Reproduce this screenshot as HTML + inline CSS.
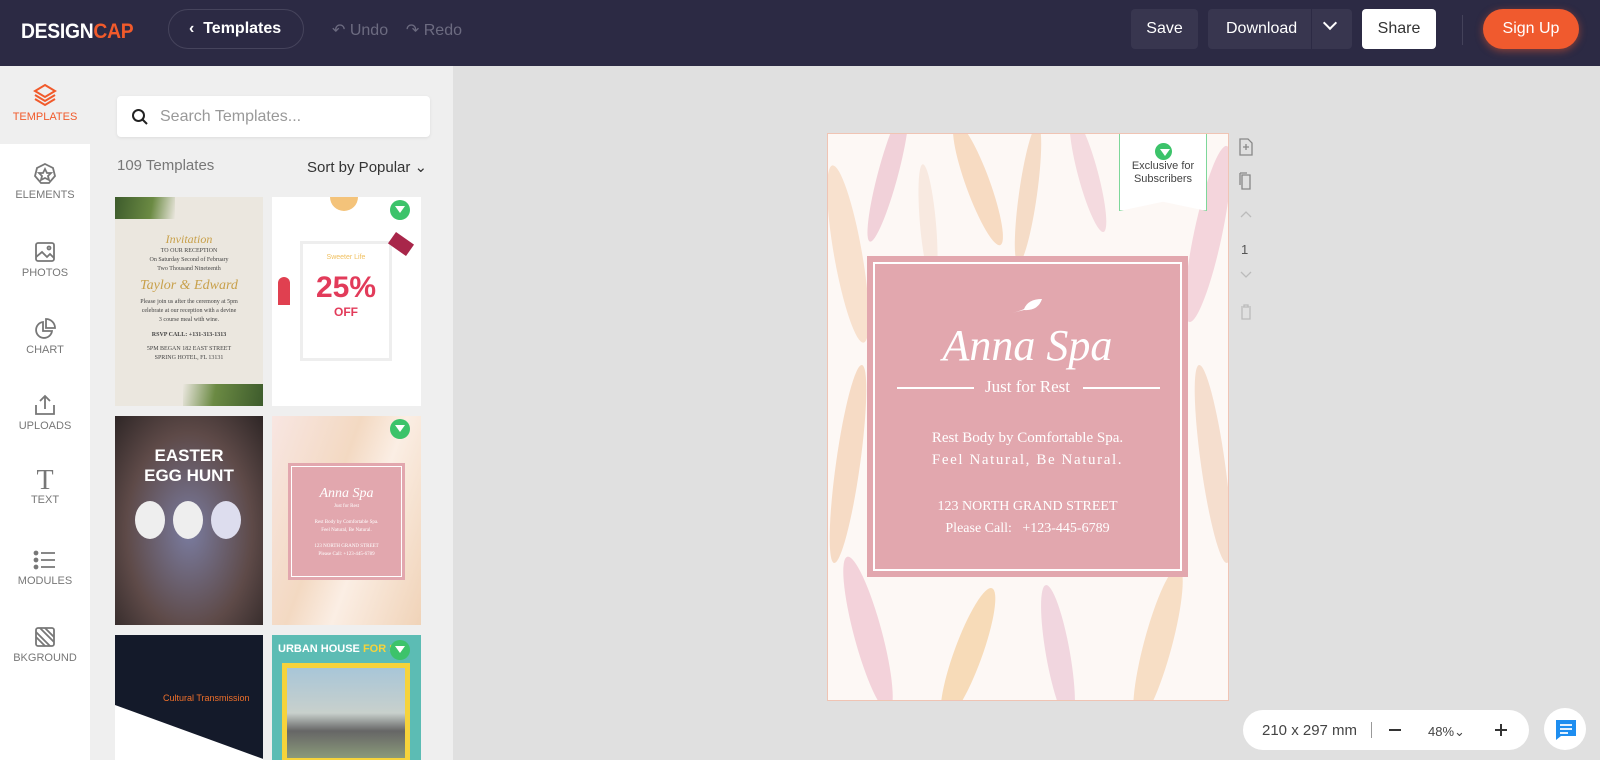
<!DOCTYPE html>
<html><head><meta charset="utf-8"><style>
*{margin:0;padding:0;box-sizing:border-box}
html,body{width:1600px;height:760px;overflow:hidden}
body{font-family:"Liberation Sans",sans-serif;background:#e0e0e0}
#w{position:relative;width:1600px;height:760px;overflow:hidden}
.a{position:absolute}
.hdr{left:0;top:0;width:1600px;height:66px;background:#2c2a44}
.btn{position:absolute;top:9px;height:40px;border-radius:4px;color:#fff;font-size:16px;display:flex;align-items:center;justify-content:center}
.side{left:0;top:66px;width:90px;height:694px;background:#fff}
.si{position:absolute;left:0;width:90px;text-align:center;font-size:11px;color:#777}
.panel{left:90px;top:66px;width:363px;height:694px;background:#efefef;overflow:hidden}
.th{position:absolute;overflow:hidden}
.gem{position:absolute;width:20px;height:20px;border-radius:50%;background:#3cc36a}
.gem:after{content:"";position:absolute;left:5px;top:6px;border-left:5px solid transparent;border-right:5px solid transparent;border-top:7px solid #fff}
.serif{font-family:"Liberation Serif",serif}
</style></head><body><div id="w">
<div class="a hdr"></div>
<div class="a" style="left:21px;top:20px;font-size:21px;font-weight:bold;color:#fff;letter-spacing:-0.3px;transform:scaleX(0.92);transform-origin:0 0">DESIGN<span style="color:#f15a2b">CAP</span></div>
<div class="a" style="left:168px;top:9px;width:136px;height:40px;border:1px solid #46445c;border-radius:20px;color:#fff;font-size:16px;font-weight:bold;display:flex;align-items:center;padding-left:20px">‹&nbsp;&nbsp;Templates</div>
<div class="a" style="left:332px;top:20px;color:#6c6b80;font-size:16px">↶ Undo &nbsp;&nbsp; ↷ Redo</div>
<div class="btn" style="left:1131px;width:67px;background:#38364f">Save</div>
<div class="btn" style="left:1208px;width:144px;background:#38364f;justify-content:flex-start;padding-left:18px">Download</div>
<div class="a" style="left:1311px;top:9px;width:1px;height:40px;background:#2c2a44"></div>
<div class="a" style="left:1325px;top:18px;width:10px;height:10px;border-right:2px solid #fff;border-bottom:2px solid #fff;transform:rotate(45deg)"></div>
<div class="btn" style="left:1362px;width:74px;background:#fff;color:#333">Share</div>
<div class="a" style="left:1462px;top:15px;width:1px;height:30px;background:#44425a"></div>
<div class="btn" style="left:1483px;width:96px;border-radius:20px;background:#f05a2e;box-shadow:0 2px 8px rgba(240,90,46,.5)">Sign Up</div>

<div class="a side"></div>
<div class="a" style="left:0;top:66px;width:90px;height:78px;background:#efefef"></div>
<div class="si" style="top:82px;color:#f15a2b"><svg width="26" height="26" viewBox="0 0 26 26" fill="none" stroke="#f15a2b" stroke-width="2"><path d="M13 3 L23 9 L13 15 L3 9Z"/><path d="M3 13 L13 19 L23 13"/><path d="M3 17 L13 23 L23 17"/></svg><br>TEMPLATES</div>
<div class="si" style="top:162px"><svg width="24" height="24" viewBox="0 0 24 24" fill="none" stroke="#777" stroke-width="1.8"><path d="M12 2 L20 6 L22 14 L16 21 L8 21 L2 14 L4 6Z"/><path d="M12 7 L14 11 L18 11 L15 14 L16 18 L12 16 L8 18 L9 14 L6 11 L10 11Z"/></svg><br>ELEMENTS</div>
<div class="si" style="top:240px"><svg width="24" height="24" viewBox="0 0 24 24" fill="none" stroke="#777" stroke-width="1.8"><rect x="3" y="3" width="18" height="18" rx="2"/><path d="M3 17 L9 12 L14 17 L17 14 L21 18"/><circle cx="16" cy="8" r="1.5"/></svg><br>PHOTOS</div>
<div class="si" style="top:317px"><svg width="24" height="24" viewBox="0 0 24 24" fill="none" stroke="#777" stroke-width="1.8"><path d="M10 5 A8 8 0 1 0 19 14 L10 14Z"/><path d="M13 2 A9 9 0 0 1 22 11 L13 11Z"/></svg><br>CHART</div>
<div class="si" style="top:393px"><svg width="24" height="24" viewBox="0 0 24 24" fill="none" stroke="#777" stroke-width="1.8"><path d="M12 16 V3 M7 8 L12 3 L17 8"/><path d="M3 12 V21 H21 V12"/></svg><br>UPLOADS</div>
<div class="si" style="top:468px"><div style="font-family:'Liberation Serif',serif;font-size:28px;line-height:26px;color:#777">T</div>TEXT</div>
<div class="si" style="top:548px"><svg width="24" height="24" viewBox="0 0 24 24" stroke="#777" stroke-width="1.8"><path d="M8 5H22M8 12H22M8 19H22"/><circle cx="3" cy="5" r="1.5" fill="#777"/><circle cx="3" cy="12" r="1.5" fill="#777"/><circle cx="3" cy="19" r="1.5" fill="#777"/></svg><br>MODULES</div>
<div class="si" style="top:625px"><svg width="24" height="24" viewBox="0 0 24 24" fill="none" stroke="#777" stroke-width="1.8"><rect x="3" y="3" width="18" height="18" rx="2"/><path d="M3 12 L12 21 M3 7 L17 21 M7 3 L21 17 M12 3 L21 12"/></svg><br>BKGROUND</div>

<div class="a panel"></div>
<div class="a" style="left:117px;top:96px;width:313px;height:41px;background:#fff;border-radius:4px;box-shadow:0 1px 3px rgba(0,0,0,.08)"></div>
<svg class="a" style="left:131px;top:108px" width="18" height="18" viewBox="0 0 18 18" fill="none" stroke="#222" stroke-width="2"><circle cx="7.5" cy="7.5" r="5.5"/><path d="M11.5 11.5 L16 16"/></svg>
<div class="a" style="left:160px;top:108px;font-size:16px;color:#999">Search Templates...</div>
<div class="a" style="left:117px;top:157px;font-size:15px;color:#777">109 Templates</div>
<div class="a" style="left:307px;top:158px;font-size:15px;color:#333">Sort by Popular ⌄</div>

<div class="th" style="left:115px;top:197px;width:148px;height:209px;background:#ebe7df">
<div class="a" style="left:0;top:0;width:60px;height:22px;background:linear-gradient(100deg,#3d5b2c,#6b8a43 60%,transparent)"></div>
<div class="a" style="right:0;bottom:0;width:80px;height:22px;background:linear-gradient(280deg,#3d5b2c,#6b8a43 60%,transparent)"></div>
<div class="a" style="left:0;top:38px;width:148px;text-align:center;font-family:'Liberation Serif',serif;font-size:6px;color:#444;line-height:9px"><span style="font-style:italic;color:#c8a04a;font-size:12px">Invitation</span><br>TO OUR RECEPTION<br>On Saturday Second of February<br>Two Thousand Nineteenth<br><span style="font-style:italic;color:#c8a04a;font-size:14px;line-height:24px">Taylor &amp; Edward</span><br>Please join us after the ceremony at 5pm<br>celebrate at our reception with a devine<br>3 course meal with wine.<br><b style="line-height:20px">RSVP CALL: +131-313-1313</b><br>5PM BEGAN 182 EAST STREET<br>SPRING HOTEL, FL 13131</div></div>

<div class="th" style="left:272px;top:197px;width:149px;height:209px;background:#fff">
<div class="a" style="left:28px;top:44px;width:92px;height:120px;border:3px solid #eee;text-align:center;font-size:7px;color:#f0c060;padding-top:10px">Sweeter Life<div style="color:#e23b5a;font-size:30px;font-weight:bold;margin-top:10px">25%</div><div style="color:#e23b5a;font-size:12px;font-weight:bold">OFF</div></div>
<div class="a" style="left:6px;top:80px;width:12px;height:28px;background:#e04050;border-radius:6px 6px 0 0"></div>
<div class="a" style="left:118px;top:40px;width:22px;height:14px;background:#a8264a;transform:rotate(35deg)"></div>
<div class="a" style="left:58px;top:0;width:28px;height:14px;background:#f4c37a;border-radius:0 0 14px 14px"></div>
<div class="gem" style="left:118px;top:3px"></div></div>

<div class="th" style="left:115px;top:416px;width:148px;height:209px;background:radial-gradient(ellipse at 50% 55%,#7a7ca0,#5e4a48 60%,#2e2626)">
<div class="a" style="left:0;top:30px;width:148px;text-align:center;color:#fff;font-weight:bold;font-size:17px;line-height:20px">EASTER<br>EGG HUNT</div>
<div class="a" style="left:20px;top:85px;width:30px;height:38px;border-radius:50%;background:#eee"></div>
<div class="a" style="left:58px;top:85px;width:30px;height:38px;border-radius:50%;background:#eee"></div>
<div class="a" style="left:96px;top:85px;width:30px;height:38px;border-radius:50%;background:#dde"></div></div>

<div class="th" style="left:272px;top:416px;width:149px;height:209px;background:linear-gradient(110deg,#f8e6e2,#f3d9c2 40%,#fbeee4 60%,#f0d3b8)">
<div class="a" style="left:16px;top:47px;width:117px;height:117px;background:#e2a7ae;border:2px solid #e2a7ae;outline:1px solid #fff;outline-offset:-4px;text-align:center;color:#fff;font-family:'Liberation Serif',serif;font-size:5px;padding-top:20px;line-height:8px"><i style="font-size:14px;line-height:18px">Anna Spa</i><br>Just for Rest<br><br>Rest Body by Comfortable Spa.<br>Feel Natural, Be Natural.<br><br>123 NORTH GRAND STREET<br>Please Call: +123-445-6789</div>
<div class="gem" style="left:118px;top:3px"></div></div>

<div class="th" style="left:115px;top:635px;width:148px;height:125px;background:#141a2a">
<div class="a" style="left:0;top:70px;width:148px;height:60px;background:#fff;transform:skewY(20deg);transform-origin:0 0"></div>
<div class="a" style="left:48px;top:58px;font-size:9px;color:#f0702a">Cultural Transmission</div></div>
<div class="th" style="left:272px;top:635px;width:149px;height:125px;background:#5cbcb4">
<div class="a" style="left:6px;top:8px;font-size:11px;color:#fff;font-weight:bold">URBAN HOUSE <span style="color:#f6d33b">FOR S</span></div>
<div class="a" style="left:10px;top:28px;width:128px;height:100px;border:5px solid #f6d33b;background:linear-gradient(#a8c6d8,#c8d0cc 50%,#666 70%,#8a9a7a)"></div>
<div class="gem" style="left:118px;top:5px"></div></div>

<!-- canvas -->
<div class="a" style="left:827px;top:133px;width:402px;height:568px;border:1px solid #f0c4b4;overflow:hidden;background:#fdf8f5">
<svg width="402" height="568" viewBox="0 0 402 568">
<g opacity=".6">
<ellipse cx="20" cy="120" rx="14" ry="90" fill="#f6d2b4" transform="rotate(-10 20 120)"/>
<ellipse cx="60" cy="40" rx="10" ry="70" fill="#e9b8c6" transform="rotate(15 60 40)"/>
<ellipse cx="150" cy="50" rx="12" ry="65" fill="#f3c8a0" transform="rotate(-20 150 50)"/>
<ellipse cx="200" cy="60" rx="9" ry="70" fill="#f0caa8" transform="rotate(8 200 60)"/>
<ellipse cx="260" cy="40" rx="10" ry="60" fill="#efc7d0" transform="rotate(-15 260 40)"/>
<ellipse cx="380" cy="100" rx="14" ry="90" fill="#efbfcb" transform="rotate(12 380 100)"/>
<ellipse cx="20" cy="330" rx="12" ry="100" fill="#f2c8a6" transform="rotate(8 20 330)"/>
<ellipse cx="385" cy="330" rx="12" ry="100" fill="#f1cdb5" transform="rotate(-8 385 330)"/>
<ellipse cx="40" cy="500" rx="14" ry="80" fill="#edbac8" transform="rotate(-15 40 500)"/>
<ellipse cx="140" cy="520" rx="14" ry="70" fill="#f4c890" transform="rotate(20 140 520)"/>
<ellipse cx="230" cy="520" rx="12" ry="70" fill="#e9c0d0" transform="rotate(-10 230 520)"/>
<ellipse cx="330" cy="510" rx="14" ry="80" fill="#f4cda6" transform="rotate(15 330 510)"/>
<ellipse cx="100" cy="90" rx="8" ry="60" fill="#f6e0d2" transform="rotate(-5 100 90)"/>
</g></svg></div>
<div class="a" style="left:1119px;top:134px;width:88px;height:77px;background:#fff;border:1px solid #7ed79a;border-top:none;clip-path:polygon(0 0,100% 0,100% 100%,50% 88%,0 100%);text-align:center;font-size:11px;color:#444;padding-top:26px;line-height:13px">Exclusive for<br>Subscribers</div>
<div class="gem" style="left:1155px;top:143px;width:17px;height:17px"></div>
<div class="a" style="left:867px;top:256px;width:321px;height:321px;background:#e2a7ae"></div>
<div class="a" style="left:873px;top:262px;width:309px;height:309px;border:2px solid #fff"></div>
<svg class="a" style="left:1010px;top:297px" width="34" height="18" viewBox="0 0 34 18"><path d="M2 16 Q10 14 14 12 Q18 2 32 2 Q28 14 14 13" fill="#fff"/></svg>
<div class="a" style="left:867px;top:320px;width:321px;text-align:center;color:#fff;font-family:'Liberation Serif',serif;font-style:italic;font-size:44px">Anna Spa</div>
<div class="a" style="left:897px;top:387px;width:77px;height:2px;background:#fff"></div>
<div class="a" style="left:1083px;top:387px;width:77px;height:2px;background:#fff"></div>
<div class="a serif" style="left:867px;top:377px;width:321px;text-align:center;color:#fff;font-size:17px">Just for Rest</div>
<div class="a serif" style="left:867px;top:427px;width:321px;text-align:center;color:#fff;font-size:15px;line-height:22px">Rest Body by Comfortable Spa.<br><span style="letter-spacing:1.6px">Feel Natural, Be Natural.</span></div>
<div class="a serif" style="left:867px;top:496px;width:321px;text-align:center;color:#fff;font-size:14px;line-height:22px">123 NORTH GRAND STREET<br>Please Call:&nbsp;&nbsp; +123-445-6789</div>

<svg class="a" style="left:1238px;top:137px" width="16" height="190" viewBox="0 0 16 190" fill="none" stroke="#888" stroke-width="1.3">
<path d="M2 2H10L14 6V18H2Z M8 7V13 M5 10H11"/>
<path d="M4 38H12V52H4Z M2 36V48 M2 36H9"/>
<path d="M3 80L8 75L13 80" stroke="#bbb"/>
<path d="M3 135L8 140L13 135" stroke="#bbb"/>
<path d="M3 170H13 M6 170V168H10V170 M4 171V182H12V171" stroke="#bbb"/>
</svg>
<div class="a" style="left:1241px;top:242px;font-size:13px;color:#555">1</div>

<div class="a" style="left:1243px;top:710px;width:286px;height:40px;background:#fff;border-radius:20px"></div>
<div class="a" style="left:1262px;top:722px;font-size:15px;color:#444">210 x 297 mm</div>
<div class="a" style="left:1371px;top:722px;width:1px;height:16px;background:#999"></div>
<div class="a" style="left:1389px;top:729px;width:12px;height:2px;background:#333"></div>
<div class="a" style="left:1428px;top:724px;font-size:13px;color:#444">48%⌄</div>
<div class="a" style="left:1495px;top:729px;width:12px;height:2px;background:#333"></div>
<div class="a" style="left:1500px;top:724px;width:2px;height:12px;background:#333"></div>
<div class="a" style="left:1544px;top:708px;width:42px;height:42px;border-radius:50%;background:#fff"></div>
<svg class="a" style="left:1554px;top:718px" width="24" height="24" viewBox="0 0 24 24"><path d="M2 2H22V18H7L2 22Z" fill="#1e8ef0"/><path d="M6 7H18M6 11H18M6 15H14" stroke="#fff" stroke-width="1.8"/></svg>
</div></body></html>
